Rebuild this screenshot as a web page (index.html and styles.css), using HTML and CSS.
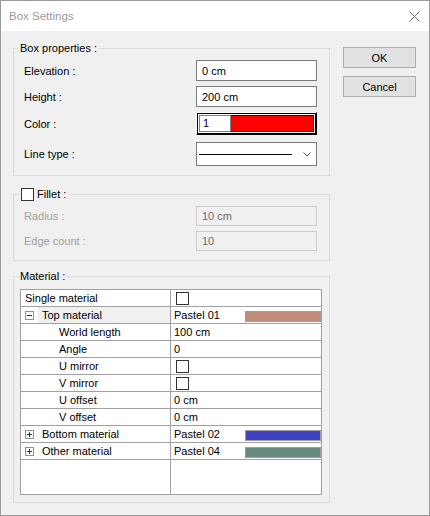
FILE: index.html
```html
<!DOCTYPE html>
<html>
<head>
<meta charset="utf-8">
<link rel="stylesheet" href="styles.css">
</head>
<body>
<div class="window">
  <div class="titlebar">
    <span class="title">Box Settings</span>
    <svg class="close" width="11" height="11" viewBox="0 0 11 11"><path d="M0.5 0.5 L10.5 10.5 M10.5 0.5 L0.5 10.5" stroke="#707070" stroke-width="1" fill="none"/></svg>
  </div>
  <div class="body">
    <div class="groups">
      <fieldset class="group">
        <legend class="legend">Box properties :</legend>
        <div class="rows rows-box">
          <div class="row"><span class="label">Elevation :</span><div class="input">0 cm</div></div>
          <div class="row"><span class="label">Height :</span><div class="input">200 cm</div></div>
          <div class="row row-color"><span class="label">Color :</span>
            <div class="color-pick"><div class="color-inner"><span class="color-num">1</span><span class="color-fill"></span></div></div>
          </div>
          <div class="row row-line"><span class="label">Line type :</span>
            <div class="combo"><span class="combo-line"></span>
              <svg class="chevron" width="8" height="5" viewBox="0 0 8 5"><polyline points="0.5,0.5 4,4 7.5,0.5" stroke="#505050" stroke-width="1" fill="none"/></svg>
            </div>
          </div>
        </div>
      </fieldset>

      <fieldset class="group group-fillet">
        <legend class="legend legend-check"><span class="check"></span><span>Fillet :</span></legend>
        <div class="rows rows-fillet">
          <div class="row"><span class="label disabled">Radius :</span><div class="input input-disabled">10 cm</div></div>
          <div class="row"><span class="label disabled">Edge count :</span><div class="input input-disabled">10</div></div>
        </div>
      </fieldset>

      <fieldset class="group group-material">
        <legend class="legend">Material :</legend>
        <div class="mat">
          <div class="grid">
            <div class="grow"><div class="gl pad-top">Single material</div><div class="gv"><span class="check check-grid"></span></div></div>
            <div class="grow"><div class="gl gl-expand">
                <svg class="exp" width="9" height="9" viewBox="0 0 9 9"><rect x="0.5" y="0.5" width="8" height="8" fill="#fff" stroke="#919191"/><path d="M2 4.5 H7" stroke="#1c2f66"/></svg>
                <span class="gl-text selected">Top material</span></div>
              <div class="gv">Pastel 01<span class="swatch" style="background:#c08c7a"></span></div></div>
            <div class="grow"><div class="gl pad-child">World length</div><div class="gv">100 cm</div></div>
            <div class="grow"><div class="gl pad-child">Angle</div><div class="gv">0</div></div>
            <div class="grow"><div class="gl pad-child">U mirror</div><div class="gv"><span class="check check-grid"></span></div></div>
            <div class="grow"><div class="gl pad-child">V mirror</div><div class="gv"><span class="check check-grid"></span></div></div>
            <div class="grow"><div class="gl pad-child">U offset</div><div class="gv">0 cm</div></div>
            <div class="grow"><div class="gl pad-child">V offset</div><div class="gv">0 cm</div></div>
            <div class="grow"><div class="gl gl-expand">
                <svg class="exp" width="9" height="9" viewBox="0 0 9 9"><rect x="0.5" y="0.5" width="8" height="8" fill="#fff" stroke="#919191"/><path d="M2 4.5 H7 M4.5 2 V7" stroke="#1c2f66"/></svg>
                <span class="gl-text">Bottom material</span></div>
              <div class="gv">Pastel 02<span class="swatch" style="background:#4141c4"></span></div></div>
            <div class="grow"><div class="gl gl-expand">
                <svg class="exp" width="9" height="9" viewBox="0 0 9 9"><rect x="0.5" y="0.5" width="8" height="8" fill="#fff" stroke="#919191"/><path d="M2 4.5 H7 M4.5 2 V7" stroke="#1c2f66"/></svg>
                <span class="gl-text">Other material</span></div>
              <div class="gv">Pastel 04<span class="swatch" style="background:#678a7e"></span></div></div>
            <div class="gfill"><div class="gl"></div><div class="gv"></div></div>
          </div>
        </div>
      </fieldset>
    </div>
    <div class="buttons">
      <button class="btn">OK</button>
      <button class="btn">Cancel</button>
    </div>
  </div>
</div>
</body>
</html>
```
FILE: styles.css
```css
html, body {
  margin: 0;
  padding: 0;
}
body {
  font-family: "Liberation Sans", Arial, sans-serif;
  font-size: 11px;
  color: #000;
}
.window {
  width: 430px;
  height: 516px;
  box-sizing: border-box;
  border: 1px solid #9a9a9a;
  background: #f0f0f0;
  display: flex;
  flex-direction: column;
}
.titlebar {
  height: 30px;
  background: #fff;
  display: flex;
  align-items: center;
  padding-left: 8px;
  flex: none;
}
.title {
  font-size: 11.5px;
  color: #999;
}
.close {
  margin-left: auto;
  margin-right: 9px;
  display: block;
}
.body {
  display: flex;
  padding: 10px 0 0 12px;
  gap: 13px;
}
.groups {
  width: 317px;
  display: flex;
  flex-direction: column;
}
.group {
  margin: 0;
  padding: 0;
  border: 1px solid #dcdcdc;
  min-width: 0;
}
.group-fillet {
  margin-top: 11px;
}
.group-material {
  margin-top: 8px;
}
.legend {
  margin-left: 4px;
  padding: 0 2px;
  line-height: 14px;
  height: 14px;
}
.legend-check {
  margin-left: 5px;
  display: flex;
  align-items: center;
  gap: 3px;
}
.check {
  display: block;
  width: 13px;
  height: 13px;
  box-sizing: border-box;
  border: 1px solid #333;
  background: #fff;
  flex: none;
}
.rows {
  display: flex;
  flex-direction: column;
  padding: 5px 12px 9px 10px;
}
.rows-box .row + .row {
  margin-top: 5px;
}
.rows-box .row-line {
  margin-top: 7px !important;
}
.rows-fillet .row + .row {
  margin-top: 5px;
}
.row {
  display: flex;
  align-items: center;
  justify-content: space-between;
}
.label.disabled {
  color: #a0a0a0;
}
.input {
  width: 121px;
  height: 21px;
  box-sizing: border-box;
  border: 1px solid #7a7a7a;
  background: #fff;
  padding-left: 5px;
  display: flex;
  align-items: center;
}
.input-disabled {
  height: 20px;
  border-color: #cccccc;
  background: #f0f0f0;
  color: #6d6d6d;
}
.color-pick {
  width: 121px;
  height: 23px;
  box-sizing: border-box;
  border-top: 1px solid #fff;
  border-left: 1px solid #fff;
  border-right: 1px solid #000;
  border-bottom: 1px solid #000;
}
.color-inner {
  height: 100%;
  box-sizing: border-box;
  border: 1px solid #000;
  background: #fff;
  display: flex;
  align-items: center;
  padding: 0 1px;
}
.color-num {
  width: 32px;
  height: 17px;
  box-sizing: border-box;
  border: 1px solid #808080;
  padding-left: 3px;
  line-height: 15px;
}
.color-fill {
  width: 83px;
  height: 17px;
  box-sizing: border-box;
  border: 1px solid #000;
  border-left: none;
  background: #ff0000;
}
.combo {
  width: 121px;
  height: 24px;
  box-sizing: border-box;
  border: 1px solid #7a7a7a;
  background: #fff;
  display: flex;
  align-items: center;
}
.combo-line {
  margin-left: 2px;
  width: 93px;
  height: 1px;
  background: #000;
}
.chevron {
  margin-left: auto;
  margin-right: 5px;
  display: block;
}
.mat {
  padding: 6px 7px 7px 6px;
}
.grid {
  height: 206px;
  box-sizing: border-box;
  border: 1px solid #a0a0a0;
  background: #fff;
  display: flex;
  flex-direction: column;
}
.grow {
  display: flex;
  height: 17px;
  box-sizing: border-box;
  border-bottom: 1px solid #a0a0a0;
  line-height: 16px;
}
.gfill {
  display: flex;
  flex: 1;
}
.gl {
  width: 150px;
  box-sizing: border-box;
  border-right: 1px solid #a0a0a0;
  padding-left: 4px;
  display: flex;
  align-items: center;
  white-space: nowrap;
}
.pad-child {
  padding-left: 38px;
}
.gl-expand {
  padding-left: 4px;
}
.exp {
  display: block;
  flex: none;
}
.gl-text {
  align-self: stretch;
  margin-left: 4px;
  padding-left: 4px;
  flex: 1;
}
.gl-text.selected {
  background: #f0f0f0;
}
.gv {
  width: 150px;
  box-sizing: border-box;
  padding-left: 3px;
  display: flex;
  align-items: center;
  white-space: nowrap;
}
.check-grid {
  align-self: flex-start;
  margin-top: 2px;
  margin-left: 2px;
}
.swatch {
  margin-left: auto;
  align-self: flex-start;
  margin-top: 4px;
  width: 76px;
  height: 11px;
  box-sizing: border-box;
  border: 1px solid #a0a0a0;
}
.buttons {
  display: flex;
  flex-direction: column;
  gap: 8px;
  padding-top: 6px;
}
.btn {
  width: 73px;
  height: 21px;
  box-sizing: border-box;
  border: 1px solid #adadad;
  background: #e1e1e1;
  font-family: "Liberation Sans", Arial, sans-serif;
  font-size: 11px;
  color: #000;
  padding: 0;
  margin: 0;
}
```
